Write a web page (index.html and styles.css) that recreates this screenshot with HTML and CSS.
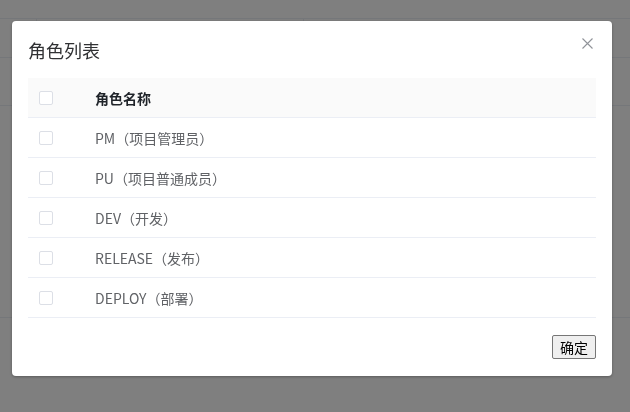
FILE: index.html
```html
<!DOCTYPE html>
<html lang="zh-CN">
<head>
<meta charset="utf-8">
<title>角色列表</title>
<link rel="stylesheet" href="styles.css">
</head>
<body>
<div class="page">
  <div class="bg-top"></div>
  <div class="bg-row">
    <div class="bg-cell bg-cell-a"></div>
    <div class="bg-cell bg-cell-b"></div>
    <div class="bg-cell bg-cell-c"></div>
  </div>
  <div class="bg-gap"></div>
  <div class="bg-space"></div>
</div>
<div class="overlay">
  <div class="dialog">
    <div class="dialog-header">
      <span class="dialog-title">角色列表</span>
      <button class="dialog-close" aria-label="关闭">
        <svg width="11" height="11" viewBox="0 0 11 11"><path d="M0.5 0.5L10.5 10.5M10.5 0.5L0.5 10.5" stroke="#909399" stroke-width="1.1" fill="none"/></svg>
      </button>
    </div>
    <div class="dialog-body">
      <div class="table">
        <div class="tr th">
          <div class="td sel"><span class="checkbox"></span></div>
          <div class="td name">角色名称</div>
        </div>
        <div class="tr">
          <div class="td sel"><span class="checkbox"></span></div>
          <div class="td name">PM（项目管理员）</div>
        </div>
        <div class="tr">
          <div class="td sel"><span class="checkbox"></span></div>
          <div class="td name">PU（项目普通成员）</div>
        </div>
        <div class="tr">
          <div class="td sel"><span class="checkbox"></span></div>
          <div class="td name">DEV（开发）</div>
        </div>
        <div class="tr">
          <div class="td sel"><span class="checkbox"></span></div>
          <div class="td name">RELEASE（发布）</div>
        </div>
        <div class="tr">
          <div class="td sel"><span class="checkbox"></span></div>
          <div class="td name">DEPLOY（部署）</div>
        </div>
      </div>
    </div>
    <div class="dialog-footer">
      <button class="btn-ok">确定</button>
    </div>
  </div>
</div>
</body>
</html>
```
FILE: styles.css
```css
html, body {
  margin: 0;
  padding: 0;
  background: #ffffff;
  font-family: "Noto Sans CJK SC", sans-serif;
}
.page {
  width: 630px;
  height: 412px;
  overflow: hidden;
}
.bg-top {
  height: 18px;
  border-bottom: 1px solid #ebeef5;
}
.bg-row {
  height: 38px;
  display: flex;
  border-bottom: 1px solid #ebeef5;
}
.bg-cell-a {
  width: 36px;
  border-right: 1px solid #ebeef5;
}
.bg-cell-b {
  width: 266px;
  border-right: 1px solid #ebeef5;
}
.bg-cell-c {
  flex: 1;
}
.bg-gap {
  height: 47px;
  border-bottom: 1px solid #ebeef5;
}
.bg-space {
  height: 211px;
  border-bottom: 1px solid #ebeef5;
}
.overlay {
  position: fixed;
  inset: 0;
  background: rgba(0, 0, 0, 0.5);
}
.dialog {
  position: relative;
  margin: 21px 0 0 12px;
  width: 600px;
  background: #ffffff;
  border-radius: 4px;
  box-shadow: 0 1px 3px rgba(0, 0, 0, 0.3);
}
.dialog-header {
  padding: 16px 16px 0 16px;
}
.dialog-title {
  display: block;
  font-size: 18px;
  line-height: 26px;
  color: #303133;
}
.dialog-close {
  position: absolute;
  top: 17px;
  right: 19px;
  width: 11px;
  height: 11px;
  padding: 0;
  border: 0;
  background: transparent;
  display: flex;
}
.dialog-body {
  padding: 15px 16px 0;
}
.table {
  font-size: 14px;
  color: #606266;
}
.tr {
  display: flex;
  align-items: center;
  height: 39px;
  border-bottom: 1px solid #ebeef5;
}
.th {
  background: #fafafa;
  color: #1f2329;
  font-weight: bold;
}
.td.sel {
  width: 55px;
  padding-left: 11px;
  box-sizing: border-box;
  display: flex;
  align-items: center;
}
.td.name {
  padding-left: 12px;
}
.checkbox {
  width: 12px;
  height: 12px;
  border: 1px solid #dcdfe6;
  border-radius: 2px;
  background: #ffffff;
  display: block;
}
.dialog-footer {
  display: flex;
  justify-content: flex-end;
  padding: 17px 16px 17px;
}
.btn-ok {
  height: 24px;
  width: 44px;
  padding: 0;
  font-size: 14px;
  font-family: "Noto Sans CJK SC", sans-serif;
  color: #000000;
  background: #efefef;
  border: 1px solid #767676;
  border-radius: 2px;
}
```
